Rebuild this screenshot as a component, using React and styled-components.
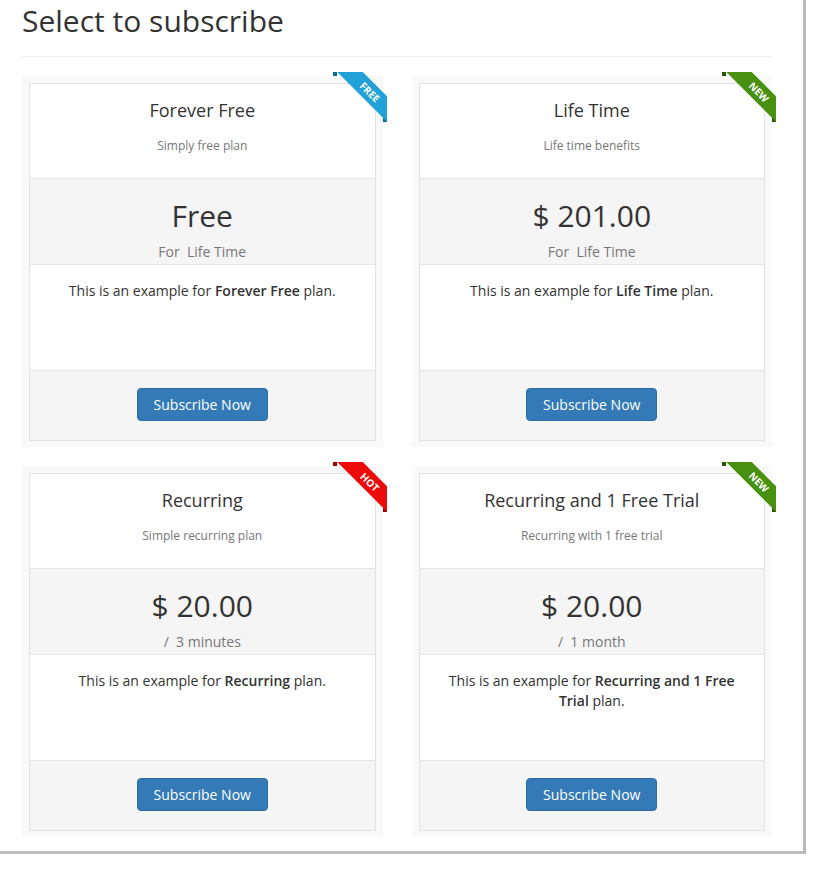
import React from 'react';
import styled, { createGlobalStyle } from 'styled-components';

const plans = [
  {
    title: 'Forever Free',
    subtitle: 'Simply free plan',
    price: 'Free',
    period: 'For\u00a0 Life Time',
    ribbon: { label: 'FREE', color: '#22a0d8', dark: '#0d6a93' },
  },
  {
    title: 'Life Time',
    subtitle: 'Life time benefits',
    price: '$ 201.00',
    period: 'For\u00a0 Life Time',
    ribbon: { label: 'NEW', color: '#48900f', dark: '#2a5707' },
  },
  {
    title: 'Recurring',
    subtitle: 'Simple recurring plan',
    price: '$ 20.00',
    period: '/\u00a0 3 minutes',
    ribbon: { label: 'HOT', color: '#ec0a0a', dark: '#9a0000' },
  },
  {
    title: 'Recurring and 1 Free Trial',
    subtitle: 'Recurring with 1 free trial',
    price: '$ 20.00',
    period: '/\u00a0 1 month',
    ribbon: { label: 'NEW', color: '#48900f', dark: '#2a5707' },
  },
];

const App = () => {
  return (
    <>
      <GlobalStyle />
      <Frame>
        <Title>Select to subscribe</Title>
        <Divider />
        <Grid>
          {plans.map((plan) => (
            <PlanWrap key={plan.title}>
              <Ribbon $dark={plan.ribbon.dark}>
                <RibbonBand $color={plan.ribbon.color}>{plan.ribbon.label}</RibbonBand>
              </Ribbon>
              <Plan>
                <PlanHeader>
                  <PlanName>{plan.title}</PlanName>
                  <PlanSub>{plan.subtitle}</PlanSub>
                </PlanHeader>
                <PriceBox>
                  <Price>{plan.price}</Price>
                  <Period>{plan.period}</Period>
                </PriceBox>
                <Description>
                  This is an example for <strong>{plan.title}</strong> plan.
                </Description>
                <Footer>
                  <Button type="button">Subscribe Now</Button>
                </Footer>
              </Plan>
            </PlanWrap>
          ))}
        </Grid>
      </Frame>
    </>
  );
};

const GlobalStyle = createGlobalStyle`
  body {
    margin: 0;
    background: #fff;
    font-family: "Open Sans", "Liberation Sans", sans-serif;
    color: #333;
  }
`;

// page frame, grey edge on the right and bottom like the screenshot
const Frame = styled.div`
  width: 750px;
  height: 851px;
  padding: 0 31px 0 22px;
  box-sizing: content-box;
  border-right: 3px solid #b9b9b9;
  border-bottom: 3px solid #bdbdbd;
`;

const Title = styled.h2`
  margin: 0;
  font-size: 30px;
  font-weight: 400;
  line-height: 42px;
  color: #333;
`;

const Divider = styled.hr`
  margin: 14px 0 19px;
  border: 0;
  border-top: 1px solid #eee;
`;

const Grid = styled.div`
  display: grid;
  grid-template-columns: 1fr 1fr;
  column-gap: 29px;
  row-gap: 19px;
`;

const PlanWrap = styled.div`
  position: relative;
  background: #f9f9f9;
  padding: 7px 7px 6px;
`;

const Ribbon = styled.div`
  position: absolute;
  top: -4px;
  right: -4px;
  width: 54px;
  height: 50px;
  overflow: hidden;
  z-index: 1;

  &::before,
  &::after {
    content: '';
    position: absolute;
    width: 4px;
    height: 4px;
    background: ${(p) => p.$dark};
  }
  &::before {
    top: 0;
    left: 0;
  }
  &::after {
    bottom: 0;
    right: 0;
  }
`;

const RibbonBand = styled.span`
  position: absolute;
  left: -8px;
  top: 11px;
  width: 90px;
  height: 18px;
  line-height: 18px;
  background: ${(p) => p.$color};
  color: #fff;
  font-size: 10px;
  font-weight: 700;
  text-align: center;
  transform: rotate(45deg);
  z-index: 1;
`;

const Plan = styled.div`
  border: 1px solid #e3e3e3;
  background: #fff;
  text-align: center;
`;

const PlanHeader = styled.div`
  height: 95px;
  box-sizing: border-box;
  padding-top: 16px;
  border-bottom: 1px solid #e6e6e6;
`;

const PlanName = styled.div`
  font-size: 18px;
  line-height: 20px;
  color: #333;
`;

const PlanSub = styled.div`
  margin-top: 17px;
  font-size: 12px;
  line-height: 17px;
  color: #777;
`;

const PriceBox = styled.div`
  height: 86px;
  box-sizing: border-box;
  padding-top: 19px;
  background: #f5f5f5;
  border-bottom: 1px solid #e6e6e6;
`;

const Price = styled.div`
  font-size: 30px;
  line-height: 36px;
  color: #333;
`;

const Period = styled.div`
  margin-top: 8px;
  font-size: 14px;
  line-height: 20px;
  color: #777;
`;

const Description = styled.div`
  height: 106px;
  box-sizing: border-box;
  padding: 16px 20px 0;
  border-bottom: 1px solid #e6e6e6;
  font-size: 14px;
  line-height: 20px;
  color: #333;

  strong {
    font-weight: 600;
  }
`;

const Footer = styled.div`
  height: 69px;
  box-sizing: border-box;
  padding-top: 17px;
  background: #f5f5f5;
`;

const Button = styled.button`
  font-family: "Open Sans", "Liberation Sans", sans-serif;
  font-size: 14px;
  line-height: 19px;
  padding: 6px 16px;
  color: #fff;
  background: #337ab7;
  border: 1px solid #2e6da4;
  border-radius: 4px;
  cursor: pointer;
`;

export default App;
